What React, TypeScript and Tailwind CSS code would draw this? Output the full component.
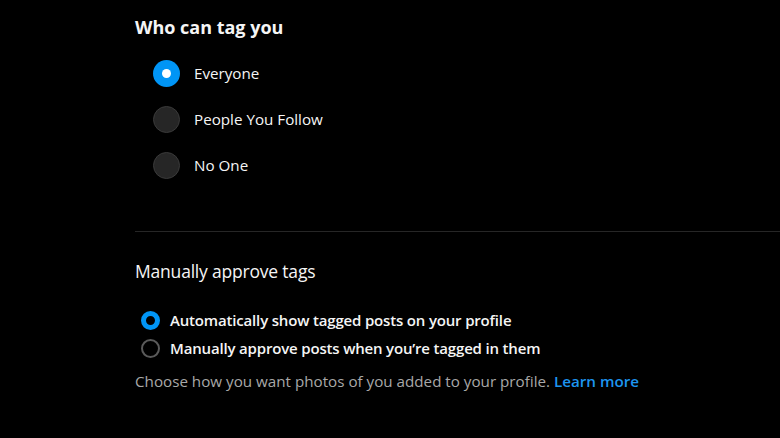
import React, { useState } from "react";

const BigRadio = ({ checked }: { checked: boolean }) =>
  checked ? (
    <span className="flex h-[27px] w-[27px] items-center justify-center rounded-full bg-[#0095f6]">
      <span className="h-[9px] w-[9px] rounded-full bg-white" />
    </span>
  ) : (
    <span className="h-[27px] w-[27px] rounded-full border border-[#3a3a3a] bg-[#262626]" />
  );

const SmallRadio = ({ checked }: { checked: boolean }) =>
  checked ? (
    <span className="h-[19px] w-[19px] rounded-full border-[5px] border-[#0095f6] bg-black" />
  ) : (
    <span className="h-[19px] w-[19px] rounded-full border-2 border-[#5a5a5a]" />
  );

const App = () => {
  const [who, setWho] = useState("Everyone");
  const [approve, setApprove] = useState(0);
  const options = ["Everyone", "People You Follow", "No One"];
  const approveOptions = [
    "Automatically show tagged posts on your profile",
    "Manually approve posts when you’re tagged in them",
  ];

  return (
    <div
      className="h-[438px] w-[780px] overflow-hidden bg-black pl-[135px] text-[#f5f5f5]"
      style={{ fontFamily: '"Open Sans", "Noto Sans", sans-serif' }}
    >
      <h2 className="pt-[14px] text-[18px] font-bold leading-[26px]">Who can tag you</h2>
      <div className="mt-[20px] flex flex-col gap-[19px] pl-[18px]">
        {options.map((o) => (
          <button
            key={o}
            onClick={() => setWho(o)}
            className="flex h-[27px] items-center gap-[14px] text-left text-[15.2px]"
          >
            <BigRadio checked={who === o} />
            <span>{o}</span>
          </button>
        ))}
      </div>
      <hr className="mt-[52px] border-0 border-t border-[#262626]" />
      <h2 className="mt-[27px] text-[17.5px] font-medium leading-[24px] tracking-[-0.2px]">
        Manually approve tags
      </h2>
      <div className="mt-[28px] flex flex-col gap-[9px] pl-[6px]">
        {approveOptions.map((o, i) => (
          <button
            key={o}
            onClick={() => setApprove(i)}
            className="flex h-[19px] items-center gap-[10px] text-left text-[15px] font-semibold tracking-[-0.17px]"
          >
            <SmallRadio checked={approve === i} />
            <span>{o}</span>
          </button>
        ))}
      </div>
      <p className="mt-[13px] text-[15.2px] leading-[20px] text-[#a8a8a8]">
        Choose how you want photos of you added to your profile.{" "}
        <a href="#" className="font-semibold text-[#1d95f0]">
          Learn more
        </a>
      </p>
    </div>
  );
};

export default App;
